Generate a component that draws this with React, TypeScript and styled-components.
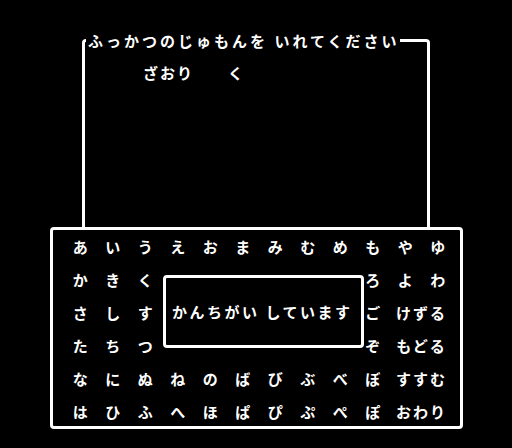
import React from "react"
import styled, { createGlobalStyle } from "styled-components"

const GlobalStyle = createGlobalStyle`
  html, body {
    margin: 0;
    padding: 0;
    background: #000;
  }
  body {
    font-family: "Noto Sans CJK JP", "Noto Sans", sans-serif;
    color: #fff;
  }
`

const Screen = styled.div`
  position: relative;
  box-sizing: border-box;
  width: 512px;
  height: 448px;
  padding-top: 39px;
  background: #000;
  overflow: hidden;
`

const PasswordWindow = styled.div`
  position: relative;
  box-sizing: border-box;
  margin-left: 82px;
  width: 348px;
  height: 188px;
  padding: 21px 0 0 58px;
  border: 3px solid #fff;
  border-bottom: none;
  border-radius: 4px 4px 0 0;
`

const Text = styled.div<{ $spacing?: number }>`
  font-size: 15px;
  line-height: 20px;
  font-weight: 700;
  letter-spacing: ${(p) => p.$spacing ?? 2}px;
  white-space: pre;
`

const Title = styled(Text)`
  position: absolute;
  top: -11px;
  left: 1px;
  padding: 0 0 0 2px;
  background: #000;
`

const KanaWindow = styled.div`
  position: relative;
  box-sizing: border-box;
  margin-left: 50px;
  width: 413px;
  height: 202px;
  padding: 0 0 0 11px;
  border: 3px solid #fff;
  border-radius: 4px;
`

const KanaGrid = styled.div`
  display: grid;
  grid-template-columns: repeat(12, 32.5px);
  grid-auto-rows: 33px;
`

const Cell = styled.div<{ $span: number }>`
  grid-column: span ${(p) => p.$span};
  display: flex;
  align-items: center;
  justify-content: center;
  font-size: 15px;
  font-weight: 700;
  letter-spacing: ${(p) => (p.$span > 1 ? "2px" : "0")};
  white-space: pre;
`

const MessageBox = styled.div`
  position: absolute;
  left: 110px;
  top: 45px;
  box-sizing: border-box;
  width: 201px;
  height: 73px;
  padding: 24px 0 0 6px;
  border: 3px solid #fff;
  border-radius: 4px;
  background: #000;
`

const rows: string[][] = [
  ["あ", "い", "う", "え", "お", "ま", "み", "む", "め", "も", "や", "ゆ"],
  ["か", "き", "く", "", "", "", "", "", "", "ろ", "よ", "わ"],
  ["さ", "し", "す", "", "", "", "", "", "", "ご", "けずる"],
  ["た", "ち", "つ", "", "", "", "", "", "", "ぞ", "もどる"],
  ["な", "に", "ぬ", "ね", "の", "ば", "び", "ぶ", "べ", "ぼ", "すすむ"],
  ["は", "ひ", "ふ", "へ", "ほ", "ぱ", "ぴ", "ぷ", "ぺ", "ぽ", "おわり"],
]

export default function App() {
  return (
    <>
      <GlobalStyle />
      <Screen>
        <PasswordWindow>
          <Title $spacing={3}>ふっかつのじゅもんを いれてください</Title>
          <Text>ざおり　　く</Text>
        </PasswordWindow>
        <KanaWindow>
          <KanaGrid>
            {rows.map((row, r) =>
              row.map((kana, c) => (
                <Cell key={`${r}-${c}`} $span={kana.length > 1 ? 2 : 1}>
                  {kana}
                </Cell>
              ))
            )}
          </KanaGrid>
          <MessageBox>
            <Text $spacing={2.5}>かんちがい しています</Text>
          </MessageBox>
        </KanaWindow>
      </Screen>
    </>
  )
}
